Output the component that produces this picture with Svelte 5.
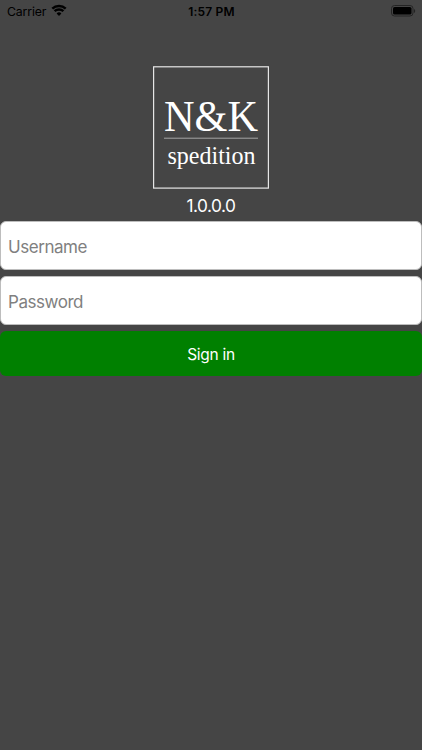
<script>
  let username = '';
  let password = '';
  const version = '1.0.0.0';

  function signIn() {
    password = '';
  }
</script>

<main class="screen">
  <header class="status-bar">
    <div class="carrier">
      <span>Carrier</span>
      <svg class="wifi" width="16" height="12" viewBox="0 0 16 12" aria-hidden="true">
        <path d="M1.3 4.6a9.6 9.6 0 0 1 13.4 0" />
        <path d="M3.6 7.2a6.3 6.3 0 0 1 8.8 0" />
        <path class="dot" d="M8 11.9 5.6 9.4a3.3 3.3 0 0 1 4.8 0z" />
      </svg>
    </div>
    <span class="time">1:57 PM</span>
    <svg class="battery" width="25" height="12" viewBox="0 0 25 12" aria-hidden="true">
      <rect class="shell" x="0.5" y="0.5" width="21.5" height="10.5" rx="3" />
      <rect x="2" y="2" width="18.5" height="7.5" rx="1.6" />
      <path class="cap" d="M23 4v4c1.6-.6 1.6-3.4 0-4z" />
    </svg>
  </header>

  <div class="brand">
    <svg class="logo" width="116" height="123" viewBox="0 0 116 123" role="img" aria-label="N&K spedition">
      <rect class="frame" x="0.6" y="0.8" width="114.8" height="121.3" />
      <text class="name" x="11" y="64.7" textLength="94" lengthAdjust="spacingAndGlyphs">N&amp;K</text>
      <path class="rule" d="M11 72.2h94" />
      <text class="sub" x="14.5" y="98" textLength="88" lengthAdjust="spacingAndGlyphs">spedition</text>
    </svg>
    <p class="version">{version}</p>
  </div>

  <form on:submit|preventDefault={signIn}>
    <input bind:value={username} type="text" placeholder="Username" aria-label="Username" />
    <input bind:value={password} type="password" placeholder="Password" aria-label="Password" />
    <button type="submit">Sign in</button>
  </form>
</main>

<style>
  * {
    box-sizing: border-box;
  }

  :global(body) {
    margin: 0;
    background: #454545;
    font-family: Inter, "Liberation Sans", sans-serif;
  }

  .screen {
    min-height: 750px;
    background: #454545;
  }

  .status-bar {
    display: grid;
    grid-template-columns: 1fr auto 1fr;
    align-items: center;
    height: 22px;
    padding: 0 6px 0 7px;
    font-size: 12px;
    color: #000;
  }

  .carrier {
    display: flex;
    align-items: center;
    gap: 5px;
    font-size: 12.3px;
    letter-spacing: -0.15px;
  }

  .wifi {
    margin-top: -2px;
    fill: none;
    stroke: #000;
    stroke-width: 2.5;
  }

  .wifi .dot {
    fill: #000;
    stroke: none;
  }

  .time {
    font-weight: 600;
    letter-spacing: 0.2px;
  }

  .battery {
    justify-self: end;
    margin-top: -1px;
  }

  .shell {
    fill: none;
    stroke: #242424;
  }

  .cap {
    fill: #242424;
  }

  .brand {
    display: flex;
    flex-direction: column;
    align-items: center;
    padding-top: 44px;
  }

  .logo {
    display: block;
  }

  .logo text {
    fill: #fff;
    font-family: "Liberation Serif", serif;
  }

  .name {
    font-size: 44px;
  }

  .sub {
    font-size: 25px;
  }

  .frame {
    fill: none;
    stroke: #e6e6e6;
    stroke-width: 1.2;
  }

  .rule {
    stroke: #a5a5a5;
    stroke-width: 1;
  }

  .version {
    height: 32.4px;
    margin: 0;
    font-size: 17.3px;
    line-height: 33px;
    letter-spacing: -0.5px;
    color: #fff;
  }

  form {
    display: flex;
    flex-direction: column;
    gap: 6px;
  }

  input {
    width: 100%;
    height: 49px;
    padding: 2px 7px 0;
    border: 1px solid #bdbdbd;
    border-radius: 6px;
    background: #fff;
    font: 17px Inter, "Liberation Sans", sans-serif;
    letter-spacing: -0.45px;
    color: #000;
    outline: none;
  }

  input::placeholder {
    color: #808080;
    opacity: 1;
  }

  button {
    width: 100%;
    height: 45px;
    padding: 2px 0 0;
    border: none;
    border-radius: 6px;
    background: #008000;
    font: 15.5px Inter, "Liberation Sans", sans-serif;
    letter-spacing: -0.3px;
    color: #fff;
    cursor: pointer;
  }
</style>
